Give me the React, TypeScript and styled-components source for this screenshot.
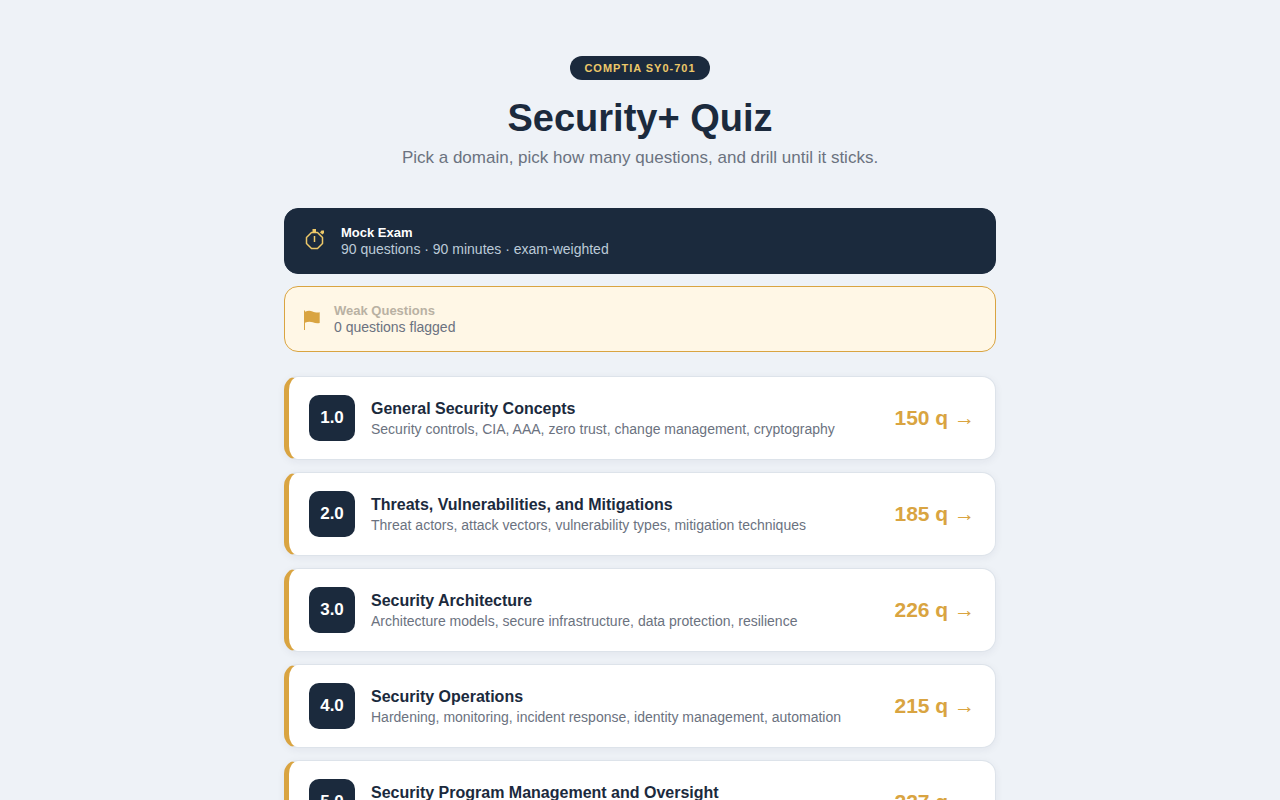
import React from "react";
import styled, { createGlobalStyle } from "styled-components";

const Global = createGlobalStyle`
  * { box-sizing: border-box; }
  body {
    margin: 0;
    background: #eef2f7;
    color: #1b2a3d;
    font-family: "Liberation Sans", Arial, sans-serif;
  }
`;

const Page = styled.main`
  max-width: 760px;
  margin: 0 auto;
  padding: 56px 24px;
`;

const Header = styled.header`
  display: flex;
  flex-direction: column;
  align-items: center;
  text-align: center;
  margin-bottom: 40px;
`;

const Badge = styled.span`
  padding: 5px 14px;
  border-radius: 20px;
  background: #1b2a3d;
  color: #edc869;
  font-size: 11px;
  line-height: 14px;
  font-weight: 700;
  letter-spacing: 1px;
`;

const Title = styled.h1`
  margin: 16px 0 8px;
  font-size: 38px;
  line-height: 44px;
  font-weight: 700;
`;

const Subtitle = styled.p`
  margin: 0;
  color: #6b7280;
  font-size: 17px;
  line-height: 20px;
`;

const Modes = styled.div`
  display: flex;
  flex-direction: column;
  gap: 12px;
  margin-bottom: 24px;
`;

const ModeButton = styled.button<{ $tone: "dark" | "warm" }>`
  display: flex;
  align-items: center;
  gap: 14px;
  width: 100%;
  padding: 15px 18px;
  border: 1px solid ${(p) => (p.$tone === "dark" ? "#1b2a3d" : "#d9a441")};
  border-radius: 14px;
  background: ${(p) => (p.$tone === "dark" ? "#1b2a3d" : "#fff7e6")};
  color: ${(p) => (p.$tone === "dark" ? "#ffffff" : "#b9b1a3")};
  font-family: inherit;
  font-size: 13px;
  text-align: left;
`;

const ModeIcon = styled.svg<{ $tone: "dark" | "warm" }>`
  flex: none;
  color: ${(p) => (p.$tone === "dark" ? "#edc869" : "#d9a441")};
`;

const ModeText = styled.span`
  display: flex;
  flex-direction: column;
  line-height: 17px;
`;

const ModeNote = styled.span<{ $tone: "dark" | "warm" }>`
  font-size: 14px;
  color: ${(p) => (p.$tone === "dark" ? "#bccad8" : "#6b7280")};
`;

const DomainList = styled.div`
  display: flex;
  flex-direction: column;
  gap: 12px;
`;

const DomainCard = styled.button`
  display: flex;
  align-items: center;
  gap: 16px;
  width: 100%;
  padding: 18px 20px;
  border: 1px solid #dde3ea;
  border-left: 5px solid #d9a441;
  border-radius: 14px;
  background: #ffffff;
  box-shadow: 0 2px 8px rgba(27, 42, 61, 0.06);
  color: #1b2a3d;
  font-family: inherit;
  text-align: left;
`;

const DomainNumber = styled.span`
  display: grid;
  place-items: center;
  flex: none;
  width: 46px;
  height: 46px;
  border-radius: 10px;
  background: #1b2a3d;
  color: #ffffff;
  font-size: 17px;
  font-weight: 700;
`;

const DomainText = styled.span`
  flex: 1;
  display: flex;
  flex-direction: column;
  gap: 2px;
`;

const DomainName = styled.strong`
  font-size: 16px;
  line-height: 20px;
`;

const DomainTopics = styled.span`
  color: #6b7280;
  font-size: 14px;
  line-height: 16px;
`;

const Count = styled.span`
  color: #d9a441;
  font-size: 21px;
  line-height: 24px;
  font-weight: 700;
  white-space: nowrap;
`;

const domains = [
  { id: "1.0", name: "General Security Concepts", topics: "Security controls, CIA, AAA, zero trust, change management, cryptography", count: 150 },
  { id: "2.0", name: "Threats, Vulnerabilities, and Mitigations", topics: "Threat actors, attack vectors, vulnerability types, mitigation techniques", count: 185 },
  { id: "3.0", name: "Security Architecture", topics: "Architecture models, secure infrastructure, data protection, resilience", count: 226 },
  { id: "4.0", name: "Security Operations", topics: "Hardening, monitoring, incident response, identity management, automation", count: 215 },
  { id: "5.0", name: "Security Program Management and Oversight", topics: "Governance, risk management, compliance, audits, security awareness", count: 227 },
];

export default function App() {
  return (
    <>
      <Global />
      <Page>
        <Header>
          <Badge>COMPTIA SY0-701</Badge>
          <Title>Security+ Quiz</Title>
          <Subtitle>Pick a domain, pick how many questions, and drill until it sticks.</Subtitle>
        </Header>
        <Modes>
          <ModeButton type="button" $tone="dark">
            <ModeIcon $tone="dark" width="24" height="30" viewBox="0 0 24 30" aria-hidden="true">
              <path
                d="M8.5 6.500h6l5 5v6l-5 5h-6l-5-5v-6z"
                fill="none"
                stroke="currentColor"
                strokeWidth="1.5"
                strokeLinejoin="round"
              />
              <path d="M9.500 3h3.500v3.500H9.500zM17 6.500l1.500-2h2.500v2.500l-1.500 1.500z" fill="currentColor" />
              <path d="M11.500 10v6" stroke="currentColor" strokeWidth="1.500" />
            </ModeIcon>
            <ModeText>
              <strong>Mock Exam</strong>
              <ModeNote $tone="dark">90 questions · 90 minutes · exam-weighted</ModeNote>
            </ModeText>
          </ModeButton>
          <ModeButton type="button" $tone="warm" disabled>
            <ModeIcon $tone="warm" width="17" height="30" viewBox="0 0 17 30" aria-hidden="true">
              <path
                d="M1 6.500h1v1.300c3-1.600 5.500-1.200 7.500-.4s4.500 1.500 7.200.9v10.600c-2.700.6-4.700.1-7-.7s-5-.9-7.700.6V26H1z"
                fill="currentColor"
              />
            </ModeIcon>
            <ModeText>
              <strong>Weak Questions</strong>
              <ModeNote $tone="warm">0 questions flagged</ModeNote>
            </ModeText>
          </ModeButton>
        </Modes>
        <DomainList>
          {domains.map((d) => (
            <DomainCard type="button" key={d.id}>
              <DomainNumber>{d.id}</DomainNumber>
              <DomainText>
                <DomainName>{d.name}</DomainName>
                <DomainTopics>{d.topics}</DomainTopics>
              </DomainText>
              <Count>{d.count} q →</Count>
            </DomainCard>
          ))}
        </DomainList>
      </Page>
    </>
  );
}
